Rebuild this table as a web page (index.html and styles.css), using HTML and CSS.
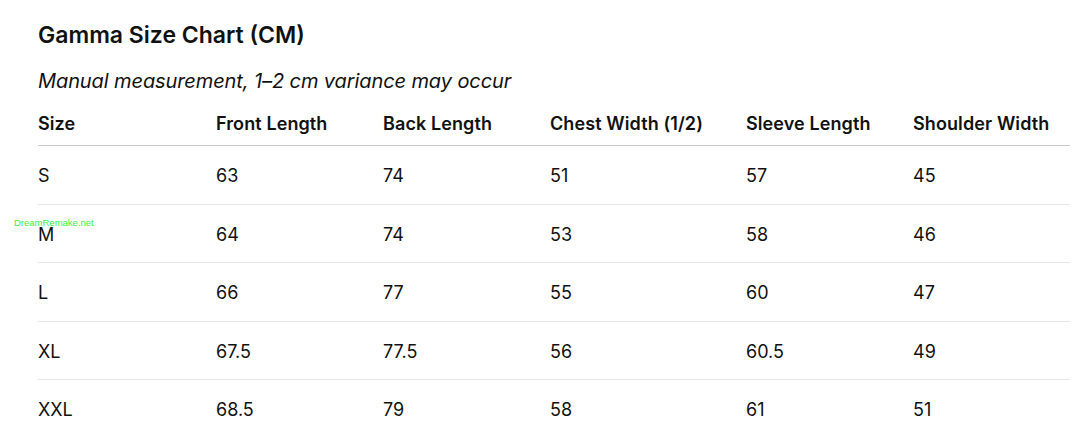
FILE: index.html
```html
<!DOCTYPE html>
<html lang="en">
<head>
<meta charset="utf-8">
<title>Gamma Size Chart</title>
<link rel="stylesheet" href="styles.css">
</head>
<body>
<div class="page">
  <h1 class="title">Gamma Size Chart (CM)</h1>
  <p class="note">Manual measurement, 1–2 cm variance may occur</p>
  <table class="chart">
    <colgroup>
      <col class="c1"><col class="c2"><col class="c3"><col class="c4"><col class="c5"><col class="c6">
    </colgroup>
    <thead>
      <tr><th>Size</th><th>Front Length</th><th>Back Length</th><th>Chest Width (1/2)</th><th>Sleeve Length</th><th>Shoulder Width</th></tr>
    </thead>
    <tbody>
      <tr><td>S</td><td>63</td><td>74</td><td>51</td><td>57</td><td>45</td></tr>
      <tr><td>M</td><td>64</td><td>74</td><td>53</td><td>58</td><td>46</td></tr>
      <tr><td>L</td><td>66</td><td>77</td><td>55</td><td>60</td><td>47</td></tr>
      <tr><td>XL</td><td>67.5</td><td>77.5</td><td>56</td><td>60.5</td><td>49</td></tr>
      <tr><td>XXL</td><td>68.5</td><td>79</td><td>58</td><td>61</td><td>51</td></tr>
    </tbody>
  </table>
  <div class="watermark">DreamRemake.net</div>
</div>
</body>
</html>
```
FILE: styles.css
```css
html, body {
  margin: 0;
  padding: 0;
  background: #fff;
}
body {
  font-family: Inter, "Noto Sans", sans-serif;
  color: #111;
}
.page {
  position: relative;
  padding: 20px 10px 0 38px;
}
.title {
  margin: 0;
  font-size: 23px;
  line-height: 30px;
  font-weight: 600;
}
.note {
  margin: 17px 0 0;
  font-size: 20px;
  line-height: 28px;
  font-style: italic;
  font-weight: 400;
  letter-spacing: -0.1px;
}
.chart {
  margin-top: 8px;
  width: 1032px;
  border-collapse: collapse;
  font-size: 18px;
}
.c1 { width: 178px; }
.c2 { width: 167px; }
.c3 { width: 167px; }
.c4 { width: 196px; }
.c5 { width: 167px; }
.c6 { width: 157px; }
.chart th {
  text-align: left;
  font-weight: 600;
  padding: 8px 0;
  line-height: 26px;
  border-bottom: 1px solid #c9c9c9;
  white-space: nowrap;
  letter-spacing: 0.1px;
}
.chart td {
  text-align: left;
  padding: 17px 0 15px;
  line-height: 25.6px;
  border-bottom: 1px solid #e6e6e6;
}
.chart tbody tr:last-child td {
  border-bottom: none;
}
.watermark {
  position: absolute;
  left: 14px;
  top: 216px;
  font-size: 9.5px;
  line-height: 14px;
  color: #3cf03c;
  font-family: "Liberation Sans", sans-serif;
}
```
